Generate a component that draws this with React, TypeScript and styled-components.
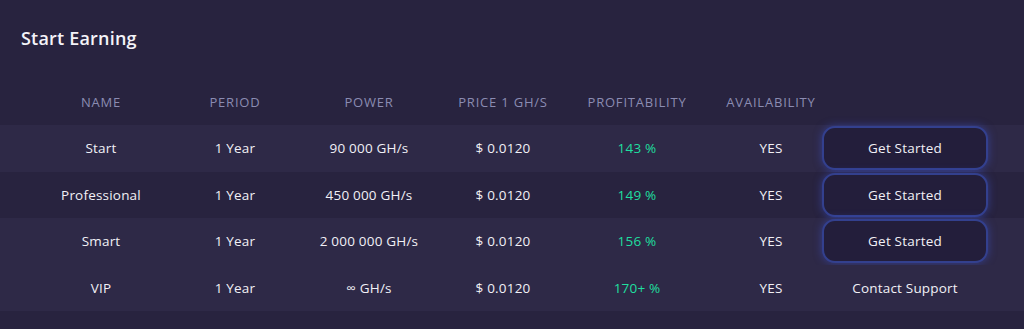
import styled, { createGlobalStyle } from 'styled-components'

interface Plan {
  name: string
  power: string
  profit: string
  action: 'start' | 'support'
  striped: boolean
}

const plans: Plan[] = [
  { name: 'Start', power: '90 000 GH/s', profit: '143 %', action: 'start', striped: true },
  { name: 'Professional', power: '450 000 GH/s', profit: '149 %', action: 'start', striped: false },
  { name: 'Smart', power: '2 000 000 GH/s', profit: '156 %', action: 'start', striped: true },
  { name: 'VIP', power: '∞ GH/s', profit: '170+ %', action: 'support', striped: true },
]

const columns = ['Name', 'Period', 'Power', 'Price 1 GH/s', 'Profitability', 'Availability', '']

export default function App() {
  return (
    <>
      <GlobalStyle />
      <Page>
        <Title>Start Earning</Title>
        <Table>
          <HeadRow>
            {columns.map((c, i) => (
              <HeadCell key={i}>{c}</HeadCell>
            ))}
          </HeadRow>
          {plans.map(p => (
            <Row key={p.name} $striped={p.striped}>
              <Cell>{p.name}</Cell>
              <Cell>1 Year</Cell>
              <Cell>{p.power}</Cell>
              <Cell>$ 0.0120</Cell>
              <Profit>{p.profit}</Profit>
              <Cell>YES</Cell>
              <Cell>
                {p.action === 'start' ? <StartButton>Get Started</StartButton> : <SupportLink>Contact Support</SupportLink>}
              </Cell>
            </Row>
          ))}
        </Table>
      </Page>
    </>
  )
}

// ----- STYLES -----

const GlobalStyle = createGlobalStyle`
  html, body {
    margin: 0;
    padding: 0;
    background: #28233f;
  }
  body {
    font-family: 'Open Sans', 'Liberation Sans', sans-serif;
    color: #f1f0f6;
  }
`

const Page = styled.div`
  width: 1024px;
  height: 329px;
  background: #28233f;
  overflow: hidden;
`

const Title = styled.h1`
  margin: 0;
  padding: 28px 0 0 21px;
  height: 78px;
  box-sizing: border-box;
  font-size: 18px;
  line-height: 20px;
  font-weight: 600;
  letter-spacing: 0.2px;
  color: #f4f3f8;
`

const Table = styled.div`
  display: flex;
  flex-direction: column;
`

const HeadRow = styled.div`
  display: grid;
  grid-template-columns: repeat(7, 134px);
  padding-left: 34px;
  height: 47px;
  align-items: center;
`

const HeadCell = styled.div`
  text-align: center;
  font-size: 13px;
  font-weight: 500;
  letter-spacing: 0.8px;
  text-transform: uppercase;
  color: #8b8cb2;
`

const Row = styled.div<{ $striped: boolean }>`
  display: grid;
  grid-template-columns: repeat(7, 134px);
  padding-left: 34px;
  height: 46.5px;
  align-items: center;
  background: ${({ $striped }) => ($striped ? '#2e2947' : '#28233f')};
`

const Cell = styled.div`
  display: flex;
  justify-content: center;
  align-items: center;
  font-size: 13.5px;
  font-weight: 500;
  letter-spacing: 0.2px;
  color: #f1f0f6;
  white-space: nowrap;
`

const Profit = styled(Cell)`
  color: #1fdf9f;
`

const StartButton = styled.button`
  flex: none;
  width: 166px;
  height: 44px;
  border-radius: 13px;
  border: 2px solid #33408e;
  background: #231e3b;
  box-shadow: 0 0 9px rgba(60, 78, 190, 0.6);
  color: #f1f0f6;
  font-family: inherit;
  font-size: 13.5px;
  font-weight: 500;
  letter-spacing: 0.2px;
  cursor: pointer;
`

const SupportLink = styled.span`
  font-size: 13.5px;
  font-weight: 500;
  letter-spacing: 0.2px;
  color: #f1f0f6;
`
